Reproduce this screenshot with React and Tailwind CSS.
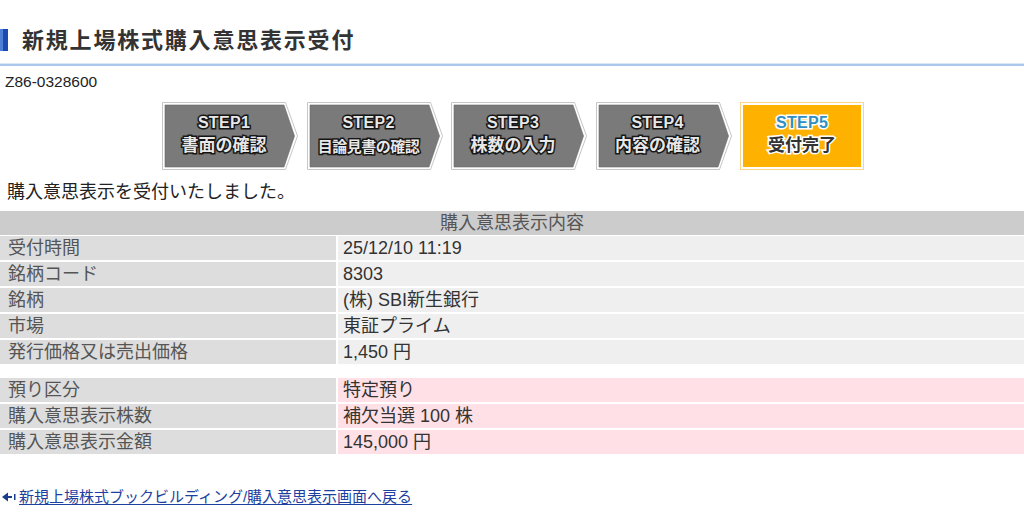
import React from "react";

const darkOutline =
  "[-webkit-text-stroke:3px_#1c1c1c] [paint-order:stroke_fill] [text-shadow:0_0_2px_#000]";
const whiteOutline =
  "[-webkit-text-stroke:3px_#ffffff] [paint-order:stroke_fill] [text-shadow:0_0_2px_#fff]";

function GrayStep({ n, sub, small }) {
  return (
    <div className="relative w-[136px] h-[68px] shrink-0">
      <svg className="absolute inset-0" width="136" height="68" viewBox="0 0 136 68">
        <polygon points="0.5,0.5 123.5,0.5 135.5,34 123.5,67.5 0.5,67.5" fill="#fff" stroke="#c6c6c6" />
        <polygon points="3,3 122,3 132.5,34 122,65 3,65" fill="#7a7a7a" stroke="#6a6a6a" strokeWidth="0.6" />
      </svg>
      <div className="relative w-[124px] h-[68px] flex flex-col items-center pt-[12px]">
        <div className={`text-[16px] leading-[18px] font-bold text-[#e8e8e8] tracking-[0.3px] ${darkOutline}`}>
          STEP{n}
        </div>
        <div
          className={`${small ? "text-[15px] tracking-[-0.5px] mt-[5px]" : "text-[17px] mt-[4px]"} leading-[20px] font-bold text-[#e8e8e8] ${darkOutline}`}
        >
          {sub}
        </div>
      </div>
    </div>
  );
}

function ActiveStep() {
  return (
    <div className="relative w-[124px] h-[68px] shrink-0">
      <svg className="absolute inset-0" width="124" height="68" viewBox="0 0 124 68">
        <rect x="0.5" y="0.5" width="123" height="67" fill="#fff" stroke="#fbd587" />
        <rect x="3" y="3" width="118" height="62" fill="#ffb100" />
      </svg>
      <div className="relative w-[124px] h-[68px] flex flex-col items-center pt-[12px]">
        <div className={`text-[16px] leading-[18px] font-bold text-[#2f8fc4] tracking-[0.3px] ${whiteOutline}`}>
          STEP5
        </div>
        <div className={`text-[17px] mt-[4px] leading-[20px] font-bold text-[#333] ${whiteOutline}`}>受付完了</div>
      </div>
    </div>
  );
}

function Row({ label, value, pink }) {
  return (
    <div className="grid grid-cols-[336px_1fr] gap-x-[2px] h-[24px]">
      <div className="bg-[#dddddd] pl-[8px] flex items-center text-[#555]">{label}</div>
      <div className={`${pink ? "bg-[#ffe0e7]" : "bg-[#efefef]"} pl-[5px] flex items-center text-[#333]`}>{value}</div>
    </div>
  );
}

export default function App() {
  return (
    <div
      className="w-[1024px] h-[524px] bg-white overflow-hidden text-[#222]"
      style={{ fontFamily: '"Liberation Sans", Arial, "Noto Sans CJK JP", sans-serif' }}
    >
      {/* Title */}
      <div className="h-[63px] pt-[29px] flex items-start">
        <div className="w-[8px] h-[22px] bg-[#1a4bb0] flex">
          <div className="w-[3px] h-full bg-[#4d7fd6]" />
        </div>
        <div className="ml-[14px] -mt-[1px] text-[22px] leading-[26px] font-bold text-[#333] tracking-[1.8px]">
          新規上場株式購入意思表示受付
        </div>
      </div>
      <div className="h-[3px] border-t border-[#dbe7f5] bg-[#aac6ea]" />

      {/* code */}
      <div className="mt-[7px] pl-[5px] text-[15.5px] leading-[18px] text-[#222]">Z86-0328600</div>

      {/* steps */}
      <div className="mt-[11px] pl-[162px] flex gap-[8.5px]">
        <GrayStep n="1" sub="書面の確認" />
        <GrayStep n="2" sub="目論見書の確認" small />
        <GrayStep n="3" sub="株数の入力" />
        <GrayStep n="4" sub="内容の確認" />
        <ActiveStep />
      </div>

      {/* message */}
      <div className="mt-[10px] pl-[7px] text-[18px] leading-[24px] text-[#222]">
        購入意思表示を受付いたしました。
      </div>

      {/* table 1 */}
      <div className="mt-[7px] text-[18px] leading-[22px]">
        <div className="h-[24px] bg-[#cccccc] flex items-center justify-center text-[#555]">購入意思表示内容</div>
        <div className="mt-[1px] flex flex-col gap-[2px]">
          <Row label="受付時間" value="25/12/10 11:19" />
          <Row label="銘柄コード" value="8303" />
          <Row label="銘柄" value="(株) SBI新生銀行" />
          <Row label="市場" value="東証プライム" />
          <Row label="発行価格又は売出価格" value="1,450 円" />
        </div>
      </div>

      {/* table 2 */}
      <div className="mt-[14px] flex flex-col gap-[2px] text-[18px] leading-[22px]">
        <Row label="預り区分" value="特定預り" pink />
        <Row label="購入意思表示株数" value="補欠当選 100 株" pink />
        <Row label="購入意思表示金額" value="145,000 円" pink />
      </div>

      {/* link */}
      <div className="mt-[33px] flex items-center pl-[2px] text-[15px] leading-[20px]">
        <svg width="14" height="10" viewBox="0 0 14 10" className="mr-[3px]">
          <polygon points="0,5 6,0.5 6,9.5" fill="#1a3c8c" />
          <rect x="5" y="4" width="5" height="2" fill="#1a3c8c" />
          <rect x="12" y="2" width="1.5" height="6" fill="#1a3c8c" />
        </svg>
        <a href="#" className="text-[#1d3fa0] underline underline-offset-2">
          新規上場株式ブックビルディング/購入意思表示画面へ戻る
        </a>
      </div>
    </div>
  );
}
